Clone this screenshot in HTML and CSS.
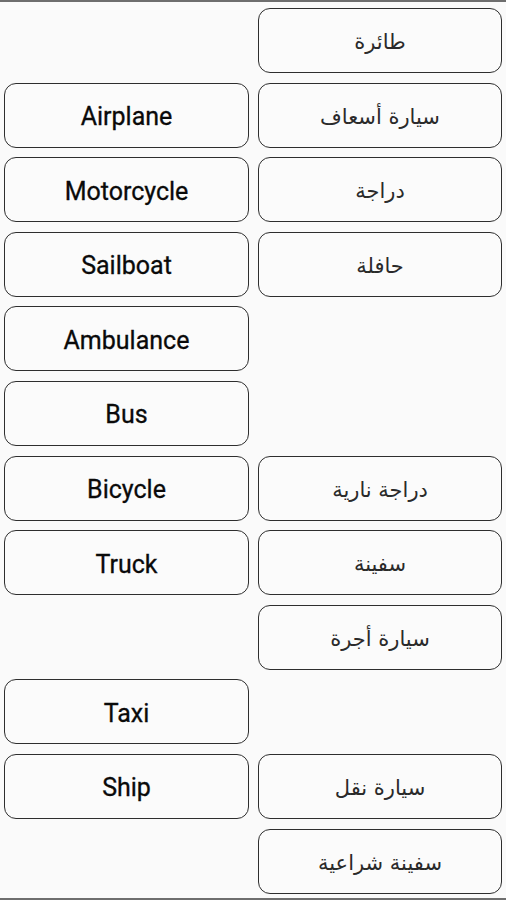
FILE: index.html
```html
<!DOCTYPE html>
<html>
<head>
<meta charset="utf-8">
<link rel="stylesheet" href="styles.css">
</head>
<body>
<div class="screen">
  <div class="grid">
    <div class="empty"></div><div class="btn ar">طائرة</div>
    <div class="btn en">Airplane</div><div class="btn ar">سيارة أسعاف</div>
    <div class="btn en">Motorcycle</div><div class="btn ar">دراجة</div>
    <div class="btn en">Sailboat</div><div class="btn ar">حافلة</div>
    <div class="btn en">Ambulance</div><div class="empty"></div>
    <div class="btn en">Bus</div><div class="empty"></div>
    <div class="btn en">Bicycle</div><div class="btn ar">دراجة نارية</div>
    <div class="btn en">Truck</div><div class="btn ar">سفينة</div>
    <div class="empty"></div><div class="btn ar">سيارة أجرة</div>
    <div class="btn en">Taxi</div><div class="empty"></div>
    <div class="btn en">Ship</div><div class="btn ar">سيارة نقل</div>
    <div class="empty"></div><div class="btn ar">سفينة شراعية</div>
  </div>
</div>
</body>
</html>
```
FILE: styles.css
```css
html, body {
  margin: 0;
  padding: 0;
  background: #fafafa;
}
.screen {
  width: 506px;
  height: 900px;
  box-sizing: border-box;
  border-top: 2px solid #6e6e6e;
  border-bottom: 2px solid #6e6e6e;
  overflow: hidden;
  background: #fafafa;
}
.grid {
  display: grid;
  grid-template-columns: 245px 244px;
  grid-auto-rows: 65px;
  column-gap: 9px;
  row-gap: 9.6px;
  padding: 6px 4px 0 4px;
}
.btn {
  box-sizing: border-box;
  border: 1.6px solid #2e2e2e;
  border-radius: 12px;
  display: flex;
  align-items: center;
  justify-content: center;
  padding-top: 3px;
  color: #0a0a0a;
  background: #fbfbfb;
}
.en {
  font-family: Roboto, "Noto Sans", sans-serif;
  font-size: 25px;
  font-weight: 400;
  -webkit-text-stroke: 0.3px #0a0a0a;
}
.ar {
  direction: rtl;
  font-family: "DejaVu Sans", sans-serif;
  font-size: 21px;
  color: #2a2a2a;
}
```
